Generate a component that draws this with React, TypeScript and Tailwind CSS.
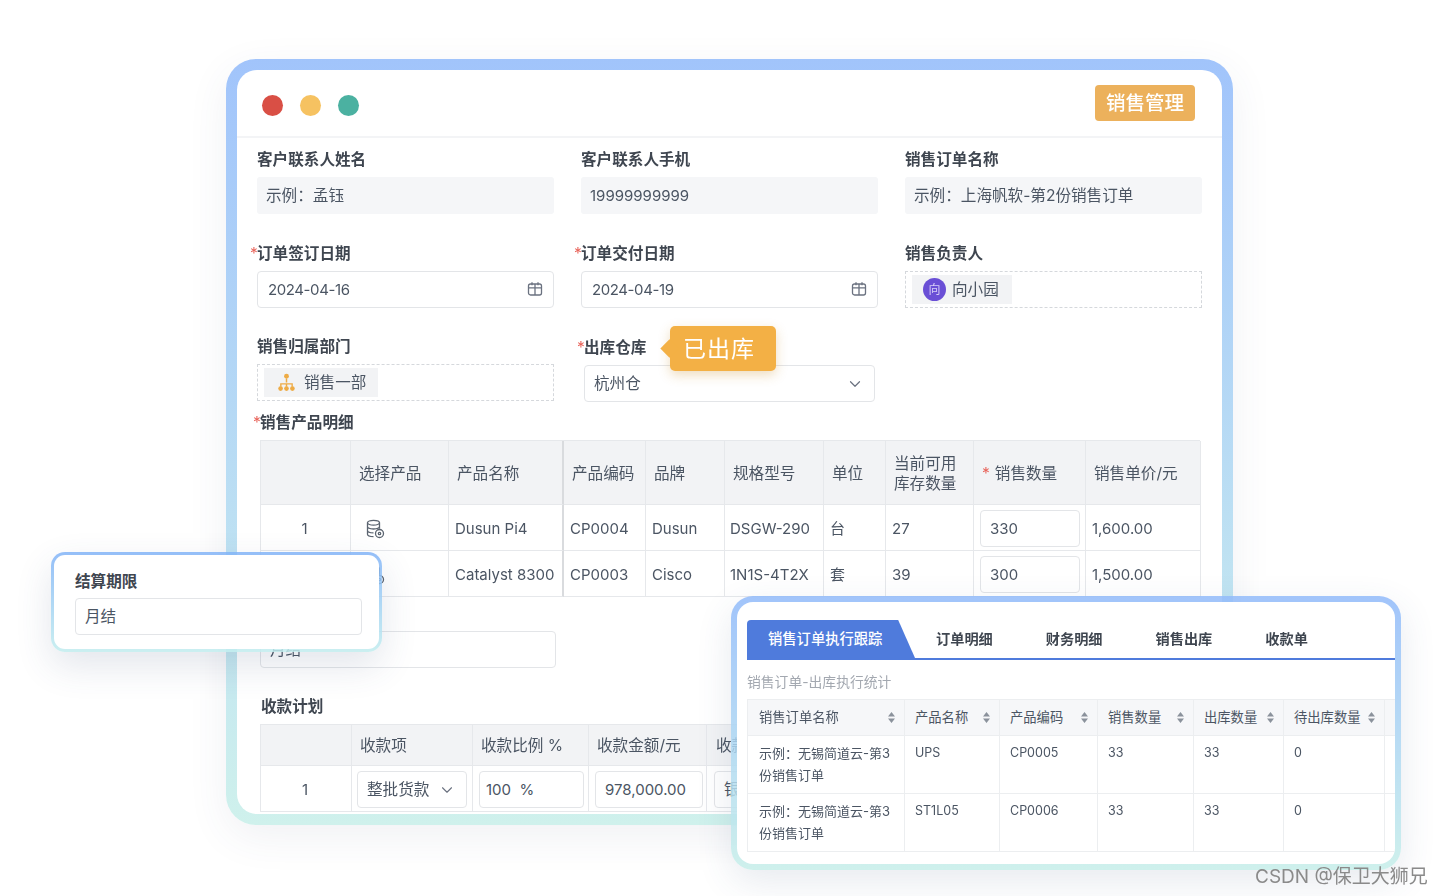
import type { ReactNode } from "react";
import { ChevronDown } from "lucide-react";

const labelCls = "text-[15.6px] leading-5 font-semibold text-[#3f4650]";
const bodyText = "text-[15.6px] leading-5 text-[#4b5563]";

function L({ children }: { children: ReactNode }) {
  return <span className="text-[15px]">{children}</span>;
}

function CalendarIcon() {
  return (
    <svg className="-mt-[2px] h-4 w-4 text-[#6b7280]" viewBox="0 0 16 16" fill="none" stroke="currentColor" strokeWidth="1.3">
      <rect x="1.5" y="3" width="13" height="11" rx="2" />
      <path d="M5 1.2v3M11 1.2v3M1.5 6.8h13M8 3v11" />
    </svg>
  );
}

function OrgIcon() {
  return (
    <svg className="h-[19px] w-[19px] text-[#eeab45]" viewBox="0 0 18 18" fill="currentColor">
      <circle cx="9" cy="3" r="2.3" />
      <rect x="8.3" y="5" width="1.4" height="4" />
      <path d="M3 13V9.6h12V13h-1.3v-2.1H9.7V13H8.3v-2.1H4.3V13z" />
      <circle cx="3.4" cy="14.8" r="2.2" />
      <circle cx="9" cy="14.8" r="2.2" />
      <circle cx="14.6" cy="14.8" r="2.2" />
    </svg>
  );
}

function ProductIcon() {
  return (
    <svg className="h-5 w-5 text-[#5b6470]" viewBox="0 0 20 20" fill="none" stroke="currentColor" strokeWidth="1.3">
      <ellipse cx="8.5" cy="3.8" rx="6" ry="2.4" />
      <path d="M2.5 3.8v11.4c0 1.3 2.7 2.4 6 2.4M14.5 3.8v6M2.5 7.6c0 1.3 2.7 2.4 6 2.4s6-1.1 6-2.4M2.5 11.4c0 1.3 2.7 2.4 6 2.4" />
      <circle cx="14.5" cy="14.5" r="4" />
      <circle cx="14.5" cy="14.5" r="1.2" />
    </svg>
  );
}

function SortIcon() {
  return (
    <svg className="h-[11px] w-[7px] shrink-0 text-[#8b929c]" viewBox="0 0 7 11" fill="currentColor">
      <path d="M3.5 0 7 4.4H0zM3.5 11 0 6.6h7z" />
    </svg>
  );
}

function Star() {
  return <span className="-ml-[7px] inline-block w-[7px] font-normal text-[#e8635a]">*</span>;
}

function Field({ label, required, children }: { label: string; required?: boolean; children: ReactNode }) {
  return (
    <div className="flex flex-col gap-[7px]">
      <div className={labelCls}>
        {required && <Star />}
        {label}
      </div>
      {children}
    </div>
  );
}

function ReadonlyBox({ children }: { children: ReactNode }) {
  return <div className={`flex h-[37px] items-center rounded-[3px] bg-[#f5f6f8] px-[9px] ${bodyText}`}>{children}</div>;
}

function InputBox({ children, icon, className = "" }: { children: ReactNode; icon?: ReactNode; className?: string }) {
  return (
    <div
      className={`flex h-[37px] items-center justify-between rounded-[4px] border border-[#e3e5e8] bg-white pl-[9px] pr-[10px] ${bodyText} ${className}`}
    >
      <span>{children}</span>
      {icon}
    </div>
  );
}

function DashedBox({ children }: { children: ReactNode }) {
  return <div className="flex h-[37px] items-center border border-dashed border-[#d5d8dc] pl-[6px]">{children}</div>;
}

function Cell({ children, head, thick, className = "" }: { children?: ReactNode; head?: boolean; thick?: boolean; className?: string }) {
  return (
    <div
      className={`flex items-center border-b border-[#e6e8eb] pt-[2px] ${thick ? "border-r-2 border-r-[#d9dbde]" : "border-r border-r-[#e6e8eb]"} ${head ? "bg-[#f2f3f5]" : "bg-white"} ${bodyText} ${className}`}
    >
      {children}
    </div>
  );
}

const productCols = "grid grid-cols-[90px_98px_115px_82px_79px_99px_62px_88px_112px_115px] grid-rows-[64px_46px_46px]";
const planCols = "grid grid-cols-[91px_121px_116px_118px_120px_300px] grid-rows-[41px_46px]";

const productRows = [
  ["1", "Dusun Pi4", "CP0004", "Dusun", "DSGW-290", "台", "27", "330", "1,600.00"],
  ["2", "Catalyst 8300", "CP0003", "Cisco", "1N1S-4T2X", "套", "39", "300", "1,500.00"],
];

function ProductTable() {
  const heads = ["产品名称", "产品编码", "品牌", "规格型号", "单位"];
  return (
    <div className={`ml-[3px] mt-[7px] w-[940px] border-l border-t border-[#e6e8eb] ${productCols}`}>
      <Cell head />
      <Cell head className="pl-[8px]">选择产品</Cell>
      {heads.map((h, i) => (
        <Cell key={h} head thick={i === 0} className="pl-[8px]">{h}</Cell>
      ))}
      <Cell head className="pl-[8px]">
        <span>当前可用<br />库存数量</span>
      </Cell>
      <Cell head className="pl-[8px]">
        <span className="mr-[5px] text-[#e8635a]">*</span>销售数量
      </Cell>
      <Cell head className="pl-[8px]">销售单价/元</Cell>
      {productRows.map((r) => (
        <div key={r[0]} className="contents">
          <Cell className="justify-center pr-[2px]"><L>{r[0]}</L></Cell>
          <Cell className="pl-[14px]"><ProductIcon /></Cell>
          <Cell thick className="pl-[6px]"><L>{r[1]}</L></Cell>
          <Cell className="pl-[6px]"><L>{r[2]}</L></Cell>
          <Cell className="pl-[6px]"><L>{r[3]}</L></Cell>
          <Cell className="pl-[5px]"><L>{r[4]}</L></Cell>
          <Cell className="pl-[6px]"><L>{r[5]}</L></Cell>
          <Cell className="pl-[6px]"><L>{r[6]}</L></Cell>
          <Cell className="pl-[6px]">
            <InputBox className="w-[100px]"><L>{r[7]}</L></InputBox>
          </Cell>
          <Cell className="pl-[6px]"><L>{r[8]}</L></Cell>
        </div>
      ))}
    </div>
  );
}

function PlanTable() {
  return (
    <div className={`ml-[3px] mt-[7px] w-[1000px] border-l border-t border-[#e6e8eb] ${planCols}`}>
      <Cell head />
      <Cell head className="pl-[8px]">收款项</Cell>
      <Cell head className="pl-[8px]">收款比例 %</Cell>
      <Cell head className="pl-[8px]">收款金额/元</Cell>
      <Cell head className="pl-[9px]">收款方式</Cell>
      <Cell head />
      <Cell className="justify-center pr-[2px]"><L>1</L></Cell>
      <Cell className="pl-[5px]">
        <InputBox className="w-[110px]" icon={<ChevronDown className="h-[18px] w-[18px] text-[#6b7280]" strokeWidth={1.5} />}>整批货款</InputBox>
      </Cell>
      <Cell className="pl-[6px]">
        <InputBox className="w-[105px] !pl-[6px]"><L>{"100\u00a0\u00a0%"}</L></InputBox>
      </Cell>
      <Cell className="pl-[6px]">
        <InputBox className="w-[108px]"><L>978,000.00</L></InputBox>
      </Cell>
      <Cell className="pl-[7px]">
        <InputBox className="w-[108px]">银行转账</InputBox>
      </Cell>
      <Cell />
    </div>
  );
}

function DateValue({ children }: { children: ReactNode }) {
  return <span className="text-[15px] tracking-[-0.4px]">{children}</span>;
}

function MainCard() {
  return (
    <div className="ml-[226px] w-[1007px] rounded-[30px] bg-gradient-to-b from-[#a1c4fb] to-[#cff1ec] p-[11px] shadow-[0_12px_40px_rgba(60,80,120,0.08)]">
      <div className="h-[744px] overflow-hidden rounded-[20px] bg-white">
        <div className="flex h-[68px] items-center justify-between border-b-2 border-[#f3f4f6] pl-[25px] pr-[27px]">
          <div className="mt-[4px] flex gap-[17px]">
            <span className="h-[21px] w-[21px] rounded-full bg-[#d94f45]" />
            <span className="h-[21px] w-[21px] rounded-full bg-[#f6c261]" />
            <span className="h-[21px] w-[21px] rounded-full bg-[#4bb1a1]" />
          </div>
          <div className="rounded-[4px] bg-[#ecb15c] px-[11px] py-[3px] text-[19.5px] leading-[30px] font-medium text-white">销售管理</div>
        </div>

        <div className="px-[20px] pt-[12px]">
          <div className="grid grid-cols-3 grid-rows-[94px_93px_auto] gap-x-[27px]">
            <Field label="客户联系人姓名"><ReadonlyBox>示例：孟钰</ReadonlyBox></Field>
            <Field label="客户联系人手机"><ReadonlyBox><L>19999999999</L></ReadonlyBox></Field>
            <Field label="销售订单名称"><ReadonlyBox>示例：上海帆软-第2份销售订单</ReadonlyBox></Field>
            <Field label="订单签订日期" required><InputBox className="!pl-[10px]" icon={<CalendarIcon />}><DateValue>2024-04-16</DateValue></InputBox></Field>
            <Field label="订单交付日期" required><InputBox className="!pl-[10px]" icon={<CalendarIcon />}><DateValue>2024-04-19</DateValue></InputBox></Field>
            <Field label="销售负责人">
              <DashedBox>
                <div className="flex h-[29px] items-center gap-[6px] bg-[#f2f3f5] pl-[11px] pr-[13px]">
                  <span className="flex h-[23px] w-[23px] items-center justify-center rounded-full bg-[#6a4fd6] text-[12px] text-[#d8d0f7]">向</span>
                  <span className={bodyText}>向小园</span>
                </div>
              </DashedBox>
            </Field>
            <Field label="销售归属部门">
              <DashedBox>
                <div className="flex h-[29px] items-center gap-[8px] bg-[#f2f3f5] pl-[13px] pr-[12px]">
                  <OrgIcon />
                  <span className={bodyText}>销售一部</span>
                </div>
              </DashedBox>
            </Field>
            <div className="px-[3px] pt-[1px]">
              <Field label="出库仓库" required>
                <InputBox icon={<ChevronDown className="h-[18px] w-[18px] text-[#6b7280]" strokeWidth={1.6} />}>杭州仓</InputBox>
              </Field>
            </div>
          </div>

          <div className={`ml-[3px] mt-[11px] ${labelCls}`}>
            <Star />销售产品明细
          </div>
          <ProductTable />

          <InputBox className="ml-[3px] mt-[34px] w-[296px]">月结</InputBox>

          <div className={`ml-[4px] mt-[29px] ${labelCls}`}>收款计划</div>
          <PlanTable />
        </div>
      </div>
    </div>
  );
}

function PeriodCard() {
  return (
    <div className="absolute left-[51px] top-[552px] w-[331px] rounded-[14px] bg-gradient-to-b from-[#82b3f7]/85 to-[#c2edee]/85 p-[3px] shadow-[0_14px_36px_rgba(60,80,120,0.14)]">
      <div className="flex h-[94px] flex-col gap-[6px] rounded-[11px] bg-white pl-[21px] pr-[17px] pt-[17px]">
        <div className={labelCls}>结算期限</div>
        <InputBox className="h-[36px]">月结</InputBox>
      </div>
    </div>
  );
}

const trackHeads = ["销售订单名称", "产品名称", "产品编码", "销售数量", "出库数量", "待出库数量"];
const trackRows = [
  ["UPS", "CP0005", "33", "33", "0"],
  ["ST1L05", "CP0006", "33", "33", "0"],
];
const trackCell = "border-b border-r border-[#eceef0] text-[#4b5563]";

function TrackCard() {
  return (
    <div className="absolute left-[731px] top-[596px] w-[670px] rounded-[22px] bg-gradient-to-b from-[#91bafa]/85 to-[#c6eee9]/85 p-[6px] shadow-[0_12px_36px_rgba(60,80,120,0.12)]">
      <div className="h-[262px] overflow-hidden rounded-[16px] bg-white pl-[10px] pt-[18px]">
        <div className="flex h-[40px] items-stretch border-b-2 border-[#4f7bdc]">
          <div className="flex w-[168px] items-center rounded-tl-[4px] bg-[#4f7bdc] pl-[21px] text-[14.3px] font-medium text-white [clip-path:polygon(0_0,90%_0,100%_100%,0_100%)]">销售订单执行跟踪</div>
          <div className="ml-[21px] flex gap-[53px] pb-[1px] text-[14.2px] font-semibold text-[#3f4650]">
            {["订单明细", "财务明细", "销售出库", "收款单"].map((t) => (
              <span key={t} className="flex items-center">{t}</span>
            ))}
          </div>
        </div>
        <div className="mt-[12px] text-[13.8px] leading-[20px] text-[#a3a8b0]">销售订单-出库执行统计</div>
        <div className="mt-[7px] grid w-[660px] grid-cols-[157px_95px_98px_96px_90px_101px_22px] grid-rows-[36px_58px_58px] border-l border-t border-[#eceef0]">
          {trackHeads.map((h, i) => (
            <div key={h} className={`flex items-center justify-between bg-[#f6f7f9] pr-[9px] text-[13.3px] ${i === 0 ? "pl-[11px]" : "pl-[10px]"} ${trackCell}`}>
              <span>{h}</span>
              <SortIcon />
            </div>
          ))}
          <div className={`bg-[#f6f7f9] ${trackCell}`} />
          {trackRows.map((r) => (
            <div key={r[0]} className="contents">
              <div className={`pl-[11px] pr-[8px] pt-[6px] text-[13px] leading-[22px] ${trackCell}`}>示例：无锡简道云-第3份销售订单</div>
              {r.map((v, i) => (
                <div key={i} className={`pl-[10px] pt-[6px] text-[12.5px] leading-[22px] ${trackCell}`}>{v}</div>
              ))}
              <div className={trackCell} />
            </div>
          ))}
        </div>
      </div>
    </div>
  );
}

function OutboundTag() {
  return (
    <div className="absolute left-[670px] top-[326px] flex h-[45px] w-[106px] items-center rounded-[5px] bg-[#f3b045] pl-[13px] pt-[2px] text-[23px] tracking-[1px] text-white shadow-[0_4px_12px_rgba(200,140,40,0.3)]">
      <span className="absolute -left-[7px] top-[16px] h-[13px] w-[13px] rotate-45 bg-[#f3b045]" />
      <span className="relative">已出库</span>
    </div>
  );
}

export default function App() {
  return (
    <div className="relative h-[896px] w-[1442px] overflow-hidden bg-white [font-family:Inter,'Noto_Sans_CJK_SC',sans-serif]">
      <div className="h-full pt-[59px] blur-[0.6px]">
        <MainCard />
        <OutboundTag />
        <PeriodCard />
        <TrackCard />
      </div>
      <div className="absolute left-[1255px] top-[865px] text-[19px] leading-[24px] text-[#8a8a8a]">CSDN @保卫大狮兄</div>
    </div>
  );
}
